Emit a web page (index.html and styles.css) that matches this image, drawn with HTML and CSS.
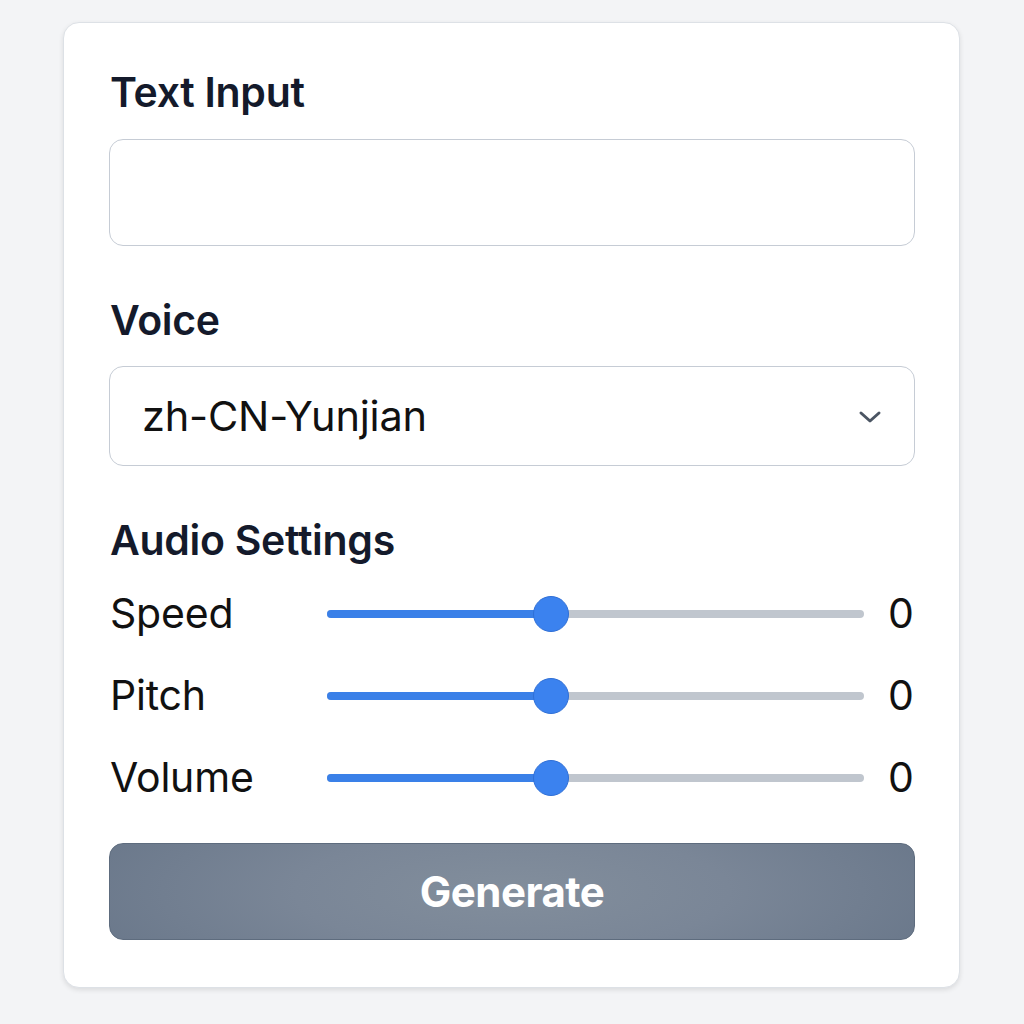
FILE: index.html
```html
<!DOCTYPE html>
<html>
<head>
<meta charset="utf-8">
<link rel="stylesheet" href="styles.css">
</head>
<body>
<div class="card">
  <div class="label first">Text Input</div>
  <div class="textbox"></div>
  <div class="label voice">Voice</div>
  <div class="select">
    <span class="select-text">zh-CN-Yunjian</span>
    <svg class="chev" width="24" height="16" viewBox="0 0 24 16"><path d="M3 4 L12 12 L21 4" fill="none" stroke="#4b5563" stroke-width="3" stroke-linecap="round" stroke-linejoin="round"/></svg>
  </div>
  <div class="label audio">Audio Settings</div>
  <div class="rows">
    <div class="row">
      <span class="rlabel">Speed</span>
      <div class="track"><div class="fill" style="width:42%"></div><div class="thumb" style="left:41.7%"></div></div>
      <span class="val">0</span>
    </div>
    <div class="row">
      <span class="rlabel">Pitch</span>
      <div class="track"><div class="fill" style="width:42%"></div><div class="thumb" style="left:41.7%"></div></div>
      <span class="val">0</span>
    </div>
    <div class="row">
      <span class="rlabel">Volume</span>
      <div class="track"><div class="fill" style="width:42%"></div><div class="thumb" style="left:41.7%"></div></div>
      <span class="val">0</span>
    </div>
  </div>
  <div class="button">Generate</div>
</div>
</body>
</html>
```
FILE: styles.css
```css
html, body { margin: 0; padding: 0; }
body {
  background: #f3f4f6;
  font-family: Inter, "Noto Sans", sans-serif;
  width: 1024px;
  height: 1024px;
  overflow: hidden;
}
.card {
  box-sizing: border-box;
  margin: 22px 0 0 63px;
  width: 897px;
  height: 966px;
  background: #fff;
  border: 1px solid #dde1e6;
  border-radius: 16px;
  box-shadow: 0 2px 5px rgba(0,0,0,0.1);
  padding: 0 44px 0 45px;
  display: flex;
  flex-direction: column;
}
.label {
  font-size: 41px;
  font-weight: 600;
  color: #141a2b;
  line-height: 44px;
  padding-left: 1px;
  letter-spacing: -0.3px;
}
.label.first { margin-top: 47px; }
.textbox {
  margin-top: 25px;
  height: 105px;
  border: 1px solid #c6ccd5;
  border-radius: 14px;
}
.label.voice { margin-top: 52px; }
.select {
  margin-top: 24px;
  height: 98px;
  border: 1px solid #c6ccd5;
  border-radius: 14px;
  display: flex;
  align-items: center;
  justify-content: space-between;
  padding: 0 32px 0 32px;
}
.select-text {
  font-size: 41.5px;
  color: #111;
  letter-spacing: -0.2px;
}
.chev { margin-top: 2px; }
.label.audio { margin-top: 52px; }
.rows {
  margin-top: 29px;
  display: flex;
  flex-direction: column;
  gap: 38px;
}
.row {
  display: flex;
  align-items: center;
  height: 44px;
}
.rlabel {
  width: 217px;
  font-size: 41px;
  color: #111;
  padding-left: 1px;
  letter-spacing: -0.2px;
}
.track {
  position: relative;
  width: 537px;
  height: 8px;
  background: #c0c6ce;
  border-radius: 4px;
  margin-top: 2px;
}
.fill {
  height: 100%;
  background: #3a80e8;
  border-radius: 4px;
}
.thumb {
  position: absolute;
  top: 50%;
  width: 36px;
  height: 36px;
  margin: -18px 0 0 -18px;
  border-radius: 50%;
  background: #3b82ef;
  border: 1px solid #2f6fd6;
  box-sizing: border-box;
}
.val {
  margin-left: 24px;
  font-size: 41px;
  color: #111;
}
.button {
  margin-top: 44px;
  height: 97px;
  border-radius: 14px;
  border: 1px solid #5e6c7e;
  box-sizing: border-box;
  background: radial-gradient(ellipse 60% 140% at 50% 50%, #828e9c 0%, #7a8697 45%, #687689 100%);
  color: #fff;
  font-size: 42px;
  font-weight: 700;
  display: flex;
  align-items: center;
  justify-content: center;
  letter-spacing: -0.5px;
}
```
